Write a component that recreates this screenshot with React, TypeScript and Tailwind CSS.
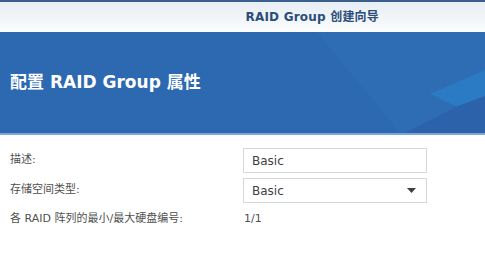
import React from "react";

const font = { fontFamily: '"DejaVu Sans", "Noto Sans CJK SC", sans-serif' };

export default function App() {
  return (
    <div className="w-[485px] h-[271px] bg-white overflow-hidden" style={font}>
      <div className="h-[2px] bg-[#3b5f8c]" />
      <div className="h-[30px] bg-gradient-to-b from-[#e6edf4] to-[#fbfcfd] flex items-center justify-end pr-[106px]">
        <span className="text-[12px] font-bold text-[#2b4d79] tracking-[0.2px]">RAID Group 创建向导</span>
      </div>
      <div className="relative h-[101px] bg-[#2c69b0] flex items-center px-[10px] overflow-hidden">
        <svg className="absolute inset-0" width="485" height="101" viewBox="0 0 485 101">
          <polygon points="317,0 485,0 485,101 400,101" fill="#2e6db4" />
          <polygon points="430,62 485,38 485,88" fill="#2b7bc4" />
          <polygon points="405,101 458,74 485,64 485,101" fill="#2b62aa" />
        </svg>
        <span className="relative text-[17px] font-bold text-white mt-[1px]">配置 RAID Group 属性</span>
      </div>
      <div className="h-[2px] bg-[#7ba6d6]" />
      <div className="pt-[13px] pl-[10px] text-[11px] text-[#505050] flex flex-col">
        <div className="flex items-center h-[25px]">
          <span className="w-[233px]">描述:</span>
          <div className="w-[184px] h-[25px] border border-[#d5d8dc] flex items-center pl-[8px] text-[12px] text-[#404040]">Basic</div>
        </div>
        <div className="flex items-center h-[25px] mt-[5px]">
          <span className="w-[233px]">存储空间类型:</span>
          <div className="w-[184px] h-[25px] border border-[#d5d8dc] flex items-center justify-between pl-[8px] pr-[10px] text-[12px] text-[#404040]">
            <span>Basic</span>
            <svg width="9" height="5" viewBox="0 0 9 5"><polygon points="0,0 9,0 4.5,5" fill="#404040" /></svg>
          </div>
        </div>
        <div className="flex items-center h-[20px] mt-[6px]">
          <span className="w-[234px]">各 RAID 阵列的最小/最大硬盘编号:</span>
          <span className="text-[11px] text-[#505050]">1/1</span>
        </div>
      </div>
    </div>
  );
}
